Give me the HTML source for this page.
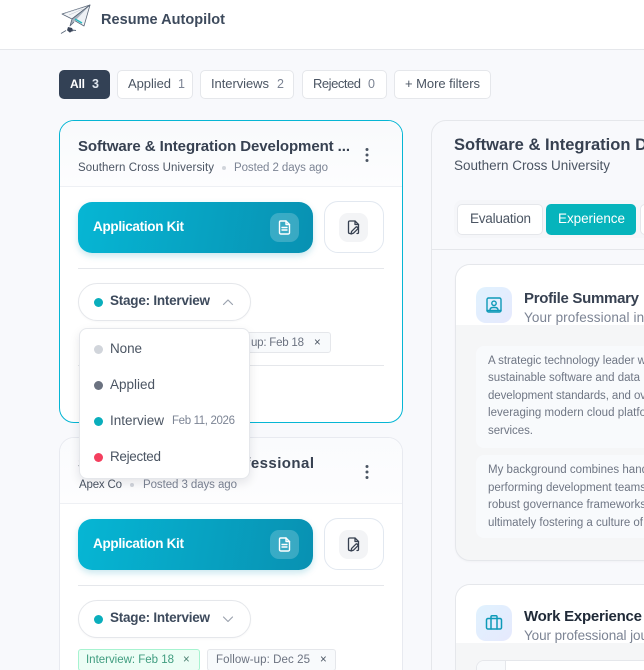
<!DOCTYPE html>
<html lang="en"><head><meta charset="utf-8"><title>Resume Autopilot</title>
<style>
html,body{margin:0;padding:0;width:644px;height:670px;overflow:hidden;background:#f8f9fc;font-family:"Liberation Sans",sans-serif}
#p{position:relative;width:644px;height:670px;overflow:hidden}
.b,.t,svg.a{position:absolute;box-sizing:border-box;display:block}
.t{white-space:nowrap;line-height:20px;height:20px}
.chip{background:#fff;border:1px solid #e5e7eb;border-radius:5px;height:29px;top:70px}
.card{background:#fff;border:1px solid #e8eaf0;border-radius:15px;left:59px;width:344px}
.kit{left:78px;width:235px;height:51px;border-radius:14px;background:linear-gradient(100deg,#06b6d4,#0891b2);box-shadow:0 3px 7px rgba(8,145,178,.22)}
.tile{width:29px;height:29px;border-radius:9px}
.sq{left:324px;width:60px;height:52px;border-radius:14px;background:#fff;border:1px solid #e2e8f0}
.pill{left:78px;width:173px;height:38px;border-radius:19px;background:#fff;border:1px solid #e5e7eb;box-shadow:0 1px 2px rgba(0,0,0,.03)}
.dot{border-radius:50%;width:9px;height:9px}
.hr{height:1px;background:#e5e7eb}
.title{font-weight:700;color:#374151;font-size:15px}
.body{font-size:11.5px;color:#6f7684}
</style></head><body><div id="p">

<!-- header -->
<div class="b" style="left:0;top:0;width:644px;height:50px;background:#fff;border-bottom:1px solid #e5e7eb"></div>
<svg class="a" style="left:58px;top:2px" width="34" height="34" viewBox="58 2 34 34">
<path d="M90 5L62 14l10 5z" fill="#f4f6f8" stroke="#5b6879" stroke-width=".8" stroke-linejoin="round"/>
<path d="M90 5L72 19l12 7z" fill="#eef1f5" stroke="#5b6879" stroke-width=".8" stroke-linejoin="round"/>
<path d="M90 5L72 19l-2 7 4-4" fill="#aab4c0" stroke="#5b6879" stroke-width=".8" stroke-linejoin="round"/>
<path d="M66 13l16-5M69 15l14-6" stroke="#b8c0cb" stroke-width=".5"/>
<path d="M75 19l7 4" stroke="#22b8bf" stroke-width="1.400"/>
<path d="M68 27l4 1 1.500 3-2.500.8-1 1-3-2.500z" fill="#3a4559"/>
<path d="M66 30.500l-5 3" stroke="#5b6879" stroke-width=".9"/>
<path d="M72 30l4 .5" stroke="#5b6879" stroke-width=".9"/>
</svg>
<span class="t" style="left:101px;top:10px;font-size:14.500px;font-weight:700;color:#3d4a5c;--w:124">Resume Autopilot</span>

<!-- filters -->
<div class="b chip" style="left:59px;width:51px;background:#334155;border-color:#334155"></div>
<span class="t" style="left:70px;top:74px;font-size:12px;font-weight:700;color:#fff;--w:15">All</span>
<span class="t" style="left:92px;top:74px;font-size:12.500px;font-weight:700;color:#e2e8f0;--w:7">3</span>
<div class="b chip" style="left:117px;width:76px"></div>
<span class="t" style="left:128px;top:74px;font-size:13px;color:#4b5563;--w:43">Applied</span>
<span class="t" style="left:178px;top:74px;font-size:12.500px;color:#7c8494">1</span>
<div class="b chip" style="left:200px;width:94px"></div>
<span class="t" style="left:211px;top:74px;font-size:13px;color:#4b5563;--w:58">Interviews</span>
<span class="t" style="left:277px;top:74px;font-size:12.500px;color:#7c8494">2</span>
<div class="b chip" style="left:302px;width:85px"></div>
<span class="t" style="left:313px;top:74px;font-size:13px;color:#4b5563;--w:48">Rejected</span>
<span class="t" style="left:368px;top:74px;font-size:12.500px;color:#7c8494">0</span>
<div class="b chip" style="left:394px;width:97px"></div>
<span class="t" style="left:405px;top:74px;font-size:13px;color:#4b5563;--w:75">+ More filters</span>

<!-- card 1 -->
<div class="b card" style="top:120px;height:303px;border-color:#06b6d4"></div>
<div class="b" style="left:60px;top:121px;width:342px;height:66px;border-radius:14px 14px 0 0;background:linear-gradient(#f8fafc,#fdfdfe);border-bottom:1px solid #eef0f4"></div>
<span class="t title" style="left:78px;top:137px;--w:272">Software &amp; Integration Development ...</span>
<span class="t" style="left:78px;top:158px;font-size:11.500px;color:#4b5563;--w:136">Southern Cross University</span>
<div class="b dot" style="left:222px;top:166px;width:4px;height:4px;background:#d1d5db"></div>
<span class="t" style="left:234px;top:158px;font-size:11.500px;color:#7c8494;--w:94">Posted 2 days ago</span>
<svg class="a" style="left:362px;top:147px" width="10" height="16" viewBox="0 0 10 16" fill="#4b5563"><circle cx="5" cy="2.500" r="1.500"/><circle cx="5" cy="8" r="1.500"/><circle cx="5" cy="13.500" r="1.500"/></svg>

<div class="b kit" style="top:202px"></div>
<span class="t" style="left:93px;top:217px;font-size:13.500px;font-weight:700;color:#fff;--w:91">Application Kit</span>
<div class="b tile" style="left:270px;top:213px;background:rgba(255,255,255,.2)"></div>
<svg class="a" style="left:276px;top:219px" width="17" height="17" viewBox="0 0 17 17" fill="none" stroke="#fff" stroke-width="1.400" stroke-linejoin="round" stroke-linecap="round"><path d="M3.500 3.200a1.200 1.200 0 0 1 1.200-1.200H10l3.500 3.500v8.300a1.200 1.200 0 0 1-1.200 1.200H4.700a1.200 1.200 0 0 1-1.200-1.200z"/><path d="M10 2v3.500h3.500M6 8.500h5M6 11h5"/></svg>
<div class="b sq" style="top:201px"></div>
<div class="b tile" style="left:339px;top:213px;background:#f3f4f6"></div>
<svg class="a" style="left:345px;top:219px" width="17" height="17" viewBox="0 0 17 17" fill="none" stroke="#374151" stroke-width="1.300" stroke-linejoin="round" stroke-linecap="round"><path d="M5 14.500h-.3a1.200 1.200 0 0 1-1.200-1.200V3.200A1.200 1.200 0 0 1 4.700 2H10l3.500 3.500v8a1 1 0 0 1-1 1H12"/><path d="M10 2v3.500h3.500"/><path d="M6 15l.6-2.600 4-4a1.200 1.200 0 0 1 2 1.700l-4 4z"/></svg>
<div class="b hr" style="left:78px;top:268px;width:306px"></div>

<div class="b pill" style="top:283px"></div>
<div class="b dot" style="left:94px;top:298px;background:#0aaebc"></div>
<span class="t" style="left:110px;top:291px;font-size:13.500px;font-weight:700;color:#3d4a5c;--w:100">Stage: Interview</span>
<svg class="a" style="left:221px;top:297px" width="14" height="10" viewBox="0 0 14 10" fill="none" stroke="#9ca3af" stroke-width="1.200" stroke-linecap="round" stroke-linejoin="round"><path d="M2.500 7.500L7 3l4.500 4.500"/></svg>

<div class="b" style="left:207px;top:332px;width:124px;height:21px;border:1px solid #e5e7eb;border-radius:3px;background:#f8fafc"></div>
<span class="t" style="left:251px;top:333px;font-size:11.500px;color:#6b7280;--w:53">up: Feb 18</span>
<span class="t" style="left:314px;top:333px;font-size:11.500px;color:#4b5563">×</span>
<div class="b hr" style="left:78px;top:365px;width:306px"></div>

<!-- card 2 -->
<div class="b card" style="top:437px;height:260px"></div>
<div class="b" style="left:60px;top:438px;width:342px;height:66px;border-radius:14px 14px 0 0;background:linear-gradient(#fafbfd,#fdfdfe);border-bottom:1px solid #eef0f4"></div>
<span class="t title" style="left:78px;top:454px;--w:236">Senior Integration Professional</span>
<span class="t" style="left:79px;top:475px;font-size:11.500px;color:#4b5563;--w:43">Apex Co</span>
<div class="b dot" style="left:130px;top:483px;width:4px;height:4px;background:#d1d5db"></div>
<span class="t" style="left:143px;top:475px;font-size:11.500px;color:#7c8494;--w:94">Posted 3 days ago</span>
<svg class="a" style="left:362px;top:464px" width="10" height="16" viewBox="0 0 10 16" fill="#4b5563"><circle cx="5" cy="2.500" r="1.500"/><circle cx="5" cy="8" r="1.500"/><circle cx="5" cy="13.500" r="1.500"/></svg>

<div class="b kit" style="top:519px"></div>
<span class="t" style="left:93px;top:534px;font-size:13.500px;font-weight:700;color:#fff;--w:91">Application Kit</span>
<div class="b tile" style="left:270px;top:530px;background:rgba(255,255,255,.2)"></div>
<svg class="a" style="left:276px;top:536px" width="17" height="17" viewBox="0 0 17 17" fill="none" stroke="#fff" stroke-width="1.400" stroke-linejoin="round" stroke-linecap="round"><path d="M3.500 3.200a1.200 1.200 0 0 1 1.200-1.200H10l3.500 3.500v8.300a1.200 1.200 0 0 1-1.200 1.200H4.700a1.200 1.200 0 0 1-1.200-1.200z"/><path d="M10 2v3.500h3.500M6 8.500h5M6 11h5"/></svg>
<div class="b sq" style="top:518px"></div>
<div class="b tile" style="left:339px;top:530px;background:#f3f4f6"></div>
<svg class="a" style="left:345px;top:536px" width="17" height="17" viewBox="0 0 17 17" fill="none" stroke="#374151" stroke-width="1.300" stroke-linejoin="round" stroke-linecap="round"><path d="M5 14.500h-.3a1.200 1.200 0 0 1-1.200-1.200V3.200A1.200 1.200 0 0 1 4.700 2H10l3.500 3.500v8a1 1 0 0 1-1 1H12"/><path d="M10 2v3.500h3.500"/><path d="M6 15l.6-2.600 4-4a1.200 1.200 0 0 1 2 1.700l-4 4z"/></svg>
<div class="b hr" style="left:78px;top:585px;width:306px"></div>

<div class="b pill" style="top:600px"></div>
<div class="b dot" style="left:94px;top:615px;background:#0aaebc"></div>
<span class="t" style="left:110px;top:608px;font-size:13.500px;font-weight:700;color:#3d4a5c;--w:100">Stage: Interview</span>
<svg class="a" style="left:221px;top:614px" width="14" height="10" viewBox="0 0 14 10" fill="none" stroke="#9ca3af" stroke-width="1.200" stroke-linecap="round" stroke-linejoin="round"><path d="M2.500 3L7 7.500 11.500 3"/></svg>

<div class="b" style="left:78px;top:649px;width:122px;height:22px;border:1px solid #a7f3d0;border-radius:3px;background:#ecfdf5"></div>
<span class="t" style="left:86px;top:650px;font-size:11.500px;color:#3f9c7f;--w:88">Interview: Feb 18</span>
<span class="t" style="left:183px;top:650px;font-size:11.500px;color:#4b7f70">×</span>
<div class="b" style="left:207px;top:649px;width:129px;height:22px;border:1px solid #e5e7eb;border-radius:3px;background:#f8fafc"></div>
<span class="t" style="left:216px;top:650px;font-size:11.500px;color:#6b7280;--w:94">Follow-up: Dec 25</span>
<span class="t" style="left:320px;top:650px;font-size:11.500px;color:#4b5563">×</span>

<!-- dropdown -->
<div class="b" style="left:79px;top:328px;width:171px;height:151px;background:#fff;border:1px solid #e5e7eb;border-radius:8px;box-shadow:0 4px 10px rgba(15,23,42,.1)"></div>
<div class="b dot" style="left:94px;top:345px;background:#d1d5db"></div>
<span class="t" style="left:110px;top:339px;font-size:13.500px;color:#4b5563;--w:32">None</span>
<div class="b dot" style="left:94px;top:381px;background:#6b7280"></div>
<span class="t" style="left:110px;top:375px;font-size:13.500px;color:#4b5563;--w:45">Applied</span>
<div class="b dot" style="left:94px;top:417px;background:#0aaebc"></div>
<span class="t" style="left:110px;top:411px;font-size:13.500px;color:#4b5563;--w:54">Interview</span>
<span class="t" style="left:172px;top:411px;font-size:11.500px;color:#7c8494;--w:63">Feb 11, 2026</span>
<div class="b dot" style="left:94px;top:453px;background:#f43f5e"></div>
<span class="t" style="left:110px;top:447px;font-size:13.500px;color:#4b5563;--w:51">Rejected</span>

<!-- right panel -->
<div class="b" style="left:431px;top:120px;width:260px;height:600px;background:#f8f9fc;border:1px solid #e5e7eb;border-radius:15px"></div>
<div class="b" style="left:432px;top:249px;width:212px;height:1px;background:#e5e7eb"></div>
<span class="t" style="left:454px;top:135px;font-size:16.500px;font-weight:700;color:#374151;--w:193">Software &amp; Integration D</span>
<span class="t" style="left:454px;top:156px;font-size:13.500px;color:#4b5563;--w:156">Southern Cross University</span>
<div class="b" style="left:454px;top:200px;width:220px;height:38px;border-radius:8px;background:#f5f6f9"></div>
<div class="b" style="left:457px;top:204px;width:86px;height:31px;border:1px solid #e5e7eb;border-radius:5px;background:#fff"></div>
<span class="t" style="left:470px;top:209px;font-size:13.500px;color:#4b5563;--w:61">Evaluation</span>
<div class="b" style="left:546px;top:204px;width:90px;height:31px;border-radius:5px;background:#06b4bc"></div>
<span class="t" style="left:558px;top:209px;font-size:13.500px;color:#fff;--w:67">Experience</span>
<div class="b" style="left:640px;top:204px;width:60px;height:31px;border:1px solid #e5e7eb;border-radius:5px;background:#fff"></div>

<!-- profile card -->
<div class="b" style="left:455px;top:264px;width:240px;height:297px;border:1px solid #e5e7eb;border-radius:15px;background:#f5f6f7;box-shadow:0 1px 2px rgba(0,0,0,.03)"></div>
<div class="b" style="left:456px;top:265px;width:238px;height:60px;background:#fff;border-radius:14px 14px 0 0;overflow:hidden">
<span class="t" style="left:68px;top:43px;font-size:13.500px;color:#7c8494;--w:124">Your professional int</span>
</div>
<div class="b" style="left:476px;top:287px;width:36px;height:36px;border-radius:10px;background:linear-gradient(135deg,#e0f2fe,#e6e9fd)"></div>
<svg class="a" style="left:485px;top:296px" width="18" height="18" viewBox="0 0 18 18" fill="none" stroke="#0e9ab8" stroke-width="1.400" stroke-linejoin="round" stroke-linecap="round"><rect x="2" y="2" width="14" height="14" rx="1.500"/><circle cx="9" cy="7.300" r="2.200"/><path d="M5 14.500v-1a3 2.500 0 0 1 3-2h2a3 2.500 0 0 1 3 2v1"/><path d="M2 14.500h14"/></svg>
<span class="t" style="left:524px;top:289px;font-size:15px;font-weight:700;color:#374151;--w:115">Profile Summary</span>

<div class="b" style="left:476px;top:346px;width:220px;height:102px;border-radius:8px;background:#f8fafc"></div>
<span class="t body" style="left:488px;top:351px;--w:158">A strategic technology leader w</span>
<span class="t body" style="left:488px;top:368px;--w:152">sustainable software and data</span>
<span class="t body" style="left:488px;top:386px;--w:158">development standards, and ov</span>
<span class="t body" style="left:488px;top:403px;--w:158">leveraging modern cloud platfo</span>
<span class="t body" style="left:488px;top:421px;--w:45">services.</span>
<div class="b" style="left:476px;top:455px;width:220px;height:83px;border-radius:8px;background:#f8fafc"></div>
<span class="t body" style="left:488px;top:460px;--w:160">My background combines hand</span>
<span class="t body" style="left:488px;top:478px;--w:158">performing development teams</span>
<span class="t body" style="left:488px;top:495px;--w:158">robust governance frameworks</span>
<span class="t body" style="left:488px;top:513px;--w:155">ultimately fostering a culture of</span>

<!-- work card -->
<div class="b" style="left:455px;top:584px;width:240px;height:200px;border:1px solid #e5e7eb;border-radius:15px;background:#f5f6f7"></div>
<div class="b" style="left:456px;top:585px;width:238px;height:58px;background:#fff;border-radius:14px 14px 0 0;overflow:hidden">
<span class="t" style="left:68px;top:41px;font-size:13.500px;color:#7c8494;--w:124">Your professional jou</span>
</div>
<div class="b" style="left:476px;top:605px;width:36px;height:36px;border-radius:10px;background:linear-gradient(135deg,#e0f2fe,#e6e9fd)"></div>
<svg class="a" style="left:485px;top:614px" width="18" height="18" viewBox="0 0 18 18" fill="none" stroke="#0e9ab8" stroke-width="1.500" stroke-linejoin="round" stroke-linecap="round"><rect x="1.500" y="4.500" width="15" height="10.500" rx="1.500"/><path d="M6 4.500V2.800A1 1 0 0 1 7 1.800h4a1 1 0 0 1 1 1v1.700M6 4.500V15M12 4.500V15"/></svg>
<span class="t" style="left:524px;top:607px;font-size:15px;font-weight:700;color:#1f2937;--w:118">Work Experience</span>
<div class="b" style="left:476px;top:660px;width:220px;height:60px;border:1px solid #e5e7eb;border-radius:8px;background:#fff;overflow:hidden"><div class="b" style="left:0;top:0;width:29px;height:60px;background:#f8fafc;border-right:1px solid #e5e7eb"></div></div>

</div>
<script>
document.querySelectorAll('.t').forEach(function(e){
  var w=parseFloat(e.style.getPropertyValue('--w'));
  if(!w)return;
  var n=e.textContent.length;
  var r=document.createRange();r.selectNodeContents(e);
  var c=r.getBoundingClientRect().width;
  if(n>1)e.style.letterSpacing=((w-c)/(n-1))+'px';
});
</script>
</body></html>
